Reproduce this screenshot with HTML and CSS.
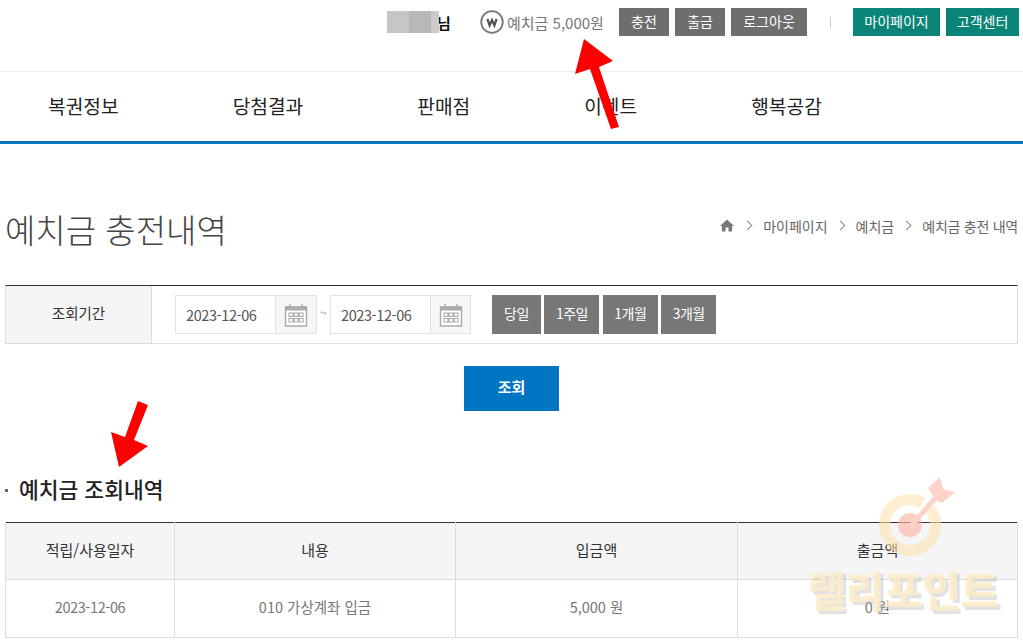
FILE: index.html
```html
<!DOCTYPE html>
<html lang="ko">

<head>
  <meta charset="UTF-8">
  <meta name="viewport" content="width=device-width, initial-scale=1.0">
  <title>예치금 충전내역</title>
  <link rel="stylesheet" href="styles.css">
</head>

<body>
  <div class="top-bar">
    <div class="user-name"><span class="name-blur"></span><b>님</b></div>
    <div class="deposit">
      <svg class="won-icon" width="24" height="24" viewBox="0 0 24 24">
        <circle cx="12" cy="12" r="10.8" fill="#fff" stroke="#777" stroke-width="1.8" />
        <path d="M7.4 8.8 L9.6 15.4 L12 10 L14.4 15.4 L16.6 8.8" fill="none" stroke="#555" stroke-width="2.3" />
      </svg>
      <span>예치금 5,000원</span>
    </div>
    <div class="top-btns">
      <a class="top-btn">충전</a>
      <a class="top-btn">출금</a>
      <a class="top-btn">로그아웃</a>
    </div>
    <span class="top-sep"></span>
    <div class="top-btns">
      <a class="top-btn green">마이페이지</a>
      <a class="top-btn green">고객센터</a>
    </div>
  </div>

  <nav class="main-nav">
    <a class="nav-item">복권정보</a>
    <a class="nav-item">당첨결과</a>
    <a class="nav-item">판매점</a>
    <a class="nav-item">이벤트</a>
    <a class="nav-item">행복공감</a>
  </nav>

  <div class="container">
    <div class="page-head">
      <h1>예치금 충전내역</h1>
      <div class="crumbs">
        <svg width="14" height="13" viewBox="0 0 14 13">
          <path d="M7 .5 L14 7 H12 V12.5 H8.5 V8.5 H5.5 V12.5 H2 V7 H0 Z" fill="#777" />
        </svg>
        <span class="gt"></span>
        <span>마이페이지</span>
        <span class="gt"></span>
        <span>예치금</span>
        <span class="gt"></span>
        <span class="crumb-last">예치금 충전 내역</span>
      </div>
    </div>

    <div class="search-box">
      <div class="search-label">조회기간</div>
      <div class="search-body">
        <div class="date-field">
          <span class="date-value">2023-12-06</span>
          <span class="date-icon">
            <svg width="24" height="24" viewBox="0 0 24 24">
              <use href="#cal" />
            </svg>
          </span>
        </div>
        <span class="tilde">~</span>
        <div class="date-field">
          <span class="date-value">2023-12-06</span>
          <span class="date-icon">
            <svg width="24" height="24" viewBox="0 0 24 24">
              <use href="#cal" />
            </svg>
          </span>
        </div>
        <div class="range-btns">
          <a class="range-btn">당일</a>
          <a class="range-btn">1주일</a>
          <a class="range-btn">1개월</a>
          <a class="range-btn">3개월</a>
        </div>
      </div>
    </div>

    <div class="submit-row"><a class="submit-btn">조회</a></div>

    <h2 class="section-title">예치금 조회내역</h2>

    <table class="list-table">
      <colgroup>
        <col class="col-date">
        <col class="col-desc">
        <col class="col-in">
        <col class="col-out">
      </colgroup>
      <thead>
        <tr>
          <th>적립/사용일자</th>
          <th>내용</th>
          <th>입금액</th>
          <th>출금액</th>
        </tr>
      </thead>
      <tbody>
        <tr>
          <td class="cell-date">2023-12-06</td>
          <td>010 가상계좌 입금</td>
          <td>5,000 원</td>
          <td>0 원</td>
        </tr>
      </tbody>
    </table>
  </div>

  <!-- calendar icon, used twice -->
  <svg class="defs" width="0" height="0">
    <symbol id="cal" viewBox="0 0 24 24">
      <path d="M1.5 4 H22.5 V23 H1.5 Z" fill="#fff" stroke="#aaa" stroke-width="1.4" />
      <path d="M1 3.5 H23 V7.5 H1 Z" fill="#aaa" />
      <path d="M6 1 V4 M18 1 V4" stroke="#aaa" stroke-width="1.4" />
      <path d="M5 10 H9 V13.5 H5 Z M10.2 10 H14 V13.5 H10.2 Z M15.2 10 H19 V13.5 H15.2 Z M5 15.5 H9 V19 H5 Z M10.2 15.5 H14 V19 H10.2 Z M15.2 15.5 H19 V19 H15.2 Z" fill="none" stroke="#aaa" stroke-width="1.1" />
    </symbol>
  </svg>

  <!-- watermark -->
  <div class="watermark">
    <svg width="85" height="90" viewBox="0 0 85 90">
      <circle cx="35" cy="53" r="25.5" fill="none" stroke="#fbe3b0" stroke-opacity="0.6" stroke-width="11" stroke-dasharray="150 10.2" transform="rotate(-40 35 53)" />
      <circle cx="35" cy="53" r="12" fill="#fbb5a5" fill-opacity="0.65" />
      <path d="M36 54 L62 24" stroke="#fdd3c9" stroke-width="5" />
      <path d="M53 16 L65 5 L68 17 L80 20 L67 31 L61 28 Z" fill="#fdd3c9" />
    </svg>
    <span class="wm-text">랠리포인트</span>
  </div>

  <!-- red arrows drawn over the screenshot -->
  <svg class="arrow arrow-top" width="55" height="100" viewBox="0 0 55 100">
    <path d="M14 4 L43 26 L29 32 L49 92 L41 94 L20 34 L5 39 Z" fill="#f00" />
  </svg>
  <svg class="arrow arrow-left" width="50" height="70" viewBox="0 0 50 70">
    <path d="M33 1 L43 5 L29 40 L43 46 L14 67 L6 32 L20 37 Z" fill="#f00" />
  </svg>
</body>

</html>
```

FILE: styles.css
```css
* {
  box-sizing: border-box;
}

body {
  margin: 0;
  height: 642px;
  overflow: hidden;
  background-color: white;
  font-family: 'Noto Sans CJK KR', 'Noto Sans', sans-serif;
  color: #333;
  position: relative;
}

.top-bar {
  height: 72px;
  padding: 8px 0 0 387px;
  display: flex;
  align-items: flex-start;
  border-bottom: 1px solid #eee;
}

.user-name {
  display: flex;
  flex: none;
  align-items: center;
  height: 28px;
  font-size: 15px;
  color: #111;
  width: 93px;
}

.user-name b {
  font-weight: 700;
}

.name-blur {
  position: relative;
  width: 52px;
  height: 22px;
  margin-top: -1px;
  margin-right: -2px;
  background: linear-gradient(90deg, #c6c6c6 0, #c6c6c6 42%, #b8b8b8 42%, #b8b8b8 84%, #cacaca 84%);
}

.deposit {
  display: flex;
  flex: none;
  align-items: center;
  gap: 3px;
  height: 28px;
  width: 139px;
  font-size: 15px;
  color: #777;
}

.won-icon {
  flex: none;
}

.top-btns {
  display: flex;
  flex: none;
  gap: 6.4px;
}

.top-btn {
  display: block;
  height: 28px;
  line-height: 27px;
  padding: 0 12px;
  background-color: #6e6e6e;
  color: white;
  font-size: 14px;
  white-space: nowrap;
}

.top-btn.green {
  background-color: #0b8478;
  padding: 0 11px;
}

.top-btns + .top-sep + .top-btns {
  gap: 6px;
}

.top-sep {
  flex: none;
  width: 1px;
  height: 11px;
  margin: 9px 22.5px 0 23px;
  background-color: #ccc;
}

.main-nav {
  height: 72px;
  padding-left: 48px;
  padding-bottom: 2px;
  display: flex;
  align-items: center;
  border-bottom: 3px solid #0075bf;
}

.nav-item {
  font-size: 19.2px;
  color: #222;
  margin-right: 114px;
}

.container {
  padding: 0 5px;
}

.page-head {
  height: 141px;
  padding-top: 60px;
  display: flex;
  justify-content: space-between;
  align-items: flex-start;
}

h1 {
  margin: 0;
  font-size: 33px;
  font-weight: 300;
  line-height: 50px;
  color: #444;
}

.crumbs {
  display: flex;
  align-items: center;
  gap: 9px;
  height: 43px;
  font-size: 14px;
  color: #666;
}

.crumbs svg {
  margin-right: 1px;
}

.crumb-last {
  letter-spacing: -0.25px;
}

.gt {
  width: 7px;
  height: 7px;
  margin-right: 3px;
  border-top: 1px solid #888;
  border-right: 1px solid #888;
  transform: rotate(45deg);
}

.search-box {
  height: 59px;
  display: flex;
  border-top: 1px solid #333;
  border-bottom: 1px solid #ddd;
  border-left: 1px solid #ddd;
  border-right: 1px solid #ddd;
}

.search-label {
  width: 146px;
  background-color: #f5f5f5;
  border-right: 1px solid #ddd;
  text-align: center;
  font-size: 14.5px;
  line-height: 53px;
  color: #333;
}

.search-body {
  flex: 1;
  display: flex;
  align-items: flex-start;
  padding: 9px 0 0 23px;
}

.date-field {
  display: flex;
  width: 142px;
  height: 39px;
  border: 1px solid #e2e2e2;
}

.date-field + .tilde + .date-field {
  width: 141px;
}

.date-value {
  width: 99px;
  padding-left: 10px;
  font-size: 14.5px;
  line-height: 37px;
  letter-spacing: -0.4px;
  color: #555;
}

.date-icon {
  flex: 1;
  display: flex;
  align-items: center;
  justify-content: center;
  background-color: #f7f7f7;
  border-left: 1px solid #e2e2e2;
}

.tilde {
  width: 13px;
  text-align: center;
  font-size: 11px;
  line-height: 34px;
  color: #777;
}

.range-btns {
  display: flex;
  gap: 3.4px;
  margin-left: 21px;
}

.range-btn {
  display: block;
  width: 55px;
  height: 39px;
  line-height: 37px;
  text-align: center;
  background-color: #777;
  color: white;
  font-size: 14px;
  letter-spacing: -0.5px;
}

.range-btn:first-child {
  width: 49px;
}

.submit-row {
  margin-top: 22px;
  display: flex;
  justify-content: center;
}

.submit-btn {
  display: block;
  width: 95px;
  height: 45px;
  line-height: 41px;
  text-align: center;
  background-color: #0075c2;
  color: white;
  font-size: 15px;
  font-weight: 700;
}

.section-title {
  margin: 60px 0 0;
  height: 51px;
  padding-left: 14px;
  font-size: 21.5px;
  line-height: 36px;
  font-weight: 500;
  color: #222;
  position: relative;
}

.section-title::before {
  content: '';
  position: absolute;
  left: 0;
  top: 18px;
  width: 3px;
  height: 3px;
  background-color: #666;
}

.list-table {
  width: 1013px;
  border-collapse: collapse;
  table-layout: fixed;
  border-top: 1px solid #333;
  font-size: 15px;
}

.col-date {
  width: 169px;
}

.col-desc {
  width: 281px;
}

.col-in {
  width: 282px;
}

.list-table th {
  height: 57px;
  padding: 0 0 3px;
  background-color: #f5f5f5;
  font-weight: 400;
  color: #333;
  border: 1px solid #ddd;
  border-top: 0;
}

.list-table td {
  height: 58px;
  padding: 0 0 5px;
  text-align: center;
  font-size: 14.5px;
  color: #777;
  border: 1px solid #ddd;
}

.list-table .cell-date {
  letter-spacing: -0.4px;
}

.defs {
  position: absolute;
}

.arrow {
  position: absolute;
}

.arrow-top {
  left: 570px;
  top: 35px;
}

.arrow-left {
  left: 105px;
  top: 400px;
}

.watermark {
  position: absolute;
  left: 808px;
  top: 472px;
  width: 200px;
}

.watermark svg {
  display: block;
  margin-left: 67px;
}

.wm-text {
  display: block;
  margin-top: 3px;
  font-size: 41.5px;
  line-height: 48px;
  font-weight: 900;
  color: rgba(253, 236, 200, 0.85);
  text-shadow: 3px 3px 0 rgba(180, 180, 180, 0.4);
  white-space: nowrap;
}
```
